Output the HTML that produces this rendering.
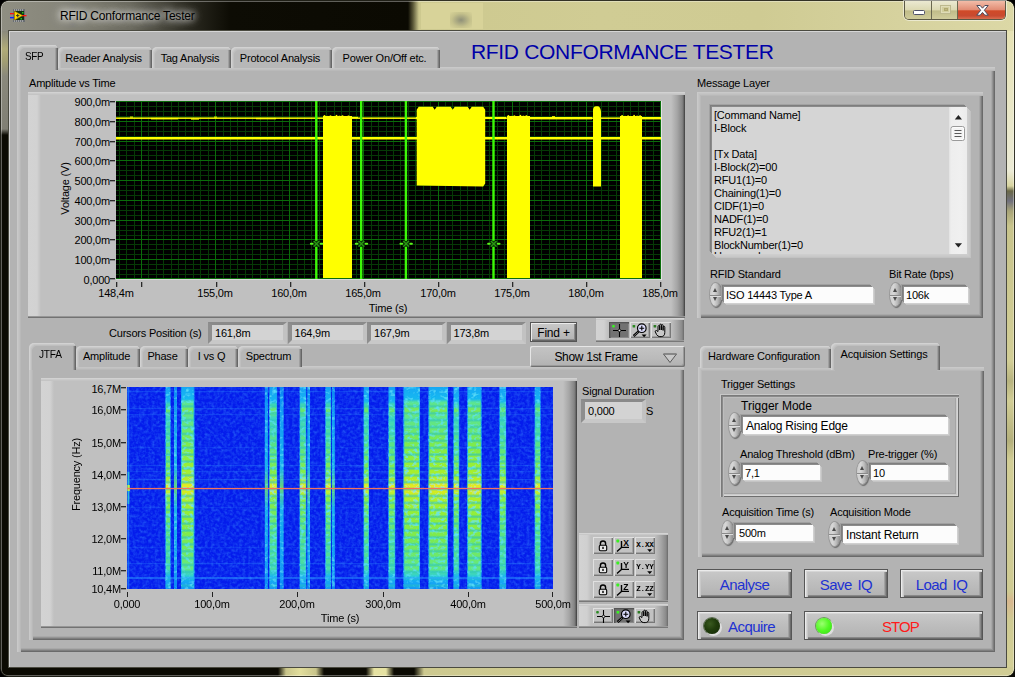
<!DOCTYPE html>
<html><head><meta charset="utf-8"><title>RFID Conformance Tester</title>
<style>
*{box-sizing:border-box;margin:0;padding:0}
html,body{width:1015px;height:677px;overflow:hidden;background:#0b0a02}
body{position:relative;font-family:"Liberation Sans",sans-serif;font-size:11px;color:#000;letter-spacing:-0.2px}
.a{position:absolute}
.t{position:absolute;white-space:nowrap;line-height:13px;height:13px}
.t12{font-size:12px;line-height:14px;height:14px}
.c{text-align:center}
.r{text-align:right}
/* generic raised page */
.page{position:absolute;background:#b3b3b3;box-shadow:inset 1px 1px 0 #c9c9c9,inset 2px 2px 0 #c4c4c4,inset 3px 3px 0 #c0c0c0,inset 4px 4px 0 #b9b9b9,inset -1px -1px 0 #6a6a6a,inset -2px -2px 0 #7e7e7e,inset -3px -3px 0 #949494,inset -4px -4px 0 #a8a8a8}
.gframe{position:absolute;background:linear-gradient(to right,#d3d3d3 0,#d2d2d2 9px,#c0c0c0 13px,#c0c0c0 calc(100% - 14px),#a6a6a6 calc(100% - 8px),#868686 calc(100% - 3px),#747474 calc(100% - 1.6px),#4c4c4c calc(100% - 1.2px),#4a4a4a 100%);box-shadow:inset 0 1px 0 #d2d2d2,inset 0 2px 0 #cacaca,inset 0 3px 0 #c4c4c4,inset 0 -1px 0 #727272,inset 0 -2px 0 #969696}
.tab{position:absolute;padding-right:3px;background:#b7b7b7;border-radius:5px 4px 0 0;box-shadow:inset 1px 1px 0 #d2d2d2,inset 2px 2px 0 #c8c8c8,inset 3px 3px 0 #bfbfbf,inset -1px 0 0 #666,inset -2px 0 0 #808080,inset -3px 0 0 #a0a0a0;text-align:center}
.tab.sel{background:#b3b3b3}
.field{position:absolute;background:#d3d3d3;border-style:solid;border-width:3px 4px 4px 4px;border-color:#8a8a8a #c2c2c2 #c8c8c8 #8e8e8e;padding-left:3px}
.input{position:absolute;background:#fcfcfc;box-shadow:-1px -1px 0 #8c8c8c,-2px -2px 0 #7e7e7e,-3px -3px 0 #a0a0a0,1px 1px 0 #d0d0d0,2px 2px 0 #c4c4c4;padding-left:2px}
.btn{position:absolute;border:1px solid #565656;background:linear-gradient(to bottom,#c9c9c9 0,#bebebe 45%,#b2b2b2 100%);box-shadow:inset 1px 1px 0 #ebebeb,inset 2px 2px 0 #d6d6d6,inset 3px 2px 0 #c8c8c8,inset -1px -1px 0 #6c6c6c,inset -2px -2px 0 #888,inset -3px -2px 0 #a2a2a2;text-align:center;color:#1e32d2;font-size:15px;letter-spacing:-0.55px;word-spacing:2px}
.spin{position:absolute;width:11px;border-radius:50%;background:linear-gradient(to right,#cfcfcf 0,#d6d6d6 35%,#bcbcbc 65%,#8e8e8e 100%);box-shadow:0 0 0 1px #9a9a9a,1px 1px 1px 1px #6e6e6e}
.spin:before,.spin:after{content:"";position:absolute;left:3px;width:0;height:0;border-left:2.5px solid transparent;border-right:2.5px solid transparent}
.spin:before{top:5px;border-bottom:4px solid #4a4a4a}
.spin:after{bottom:5px;border-top:4px solid #4a4a4a}
.spin i{position:absolute;left:0;right:0;top:50%;height:1px;background:#8a8a8a;box-shadow:0 1px 0 #dcdcdc}
</style></head>
<body>
<!-- window frame -->
<div class="a" style="left:0;top:0;width:1015px;height:677px;background:#0b0a02"></div>
<div class="a" style="left:0;top:0;width:1015px;height:31px;background:linear-gradient(to right,#8f8e82 0,#87867a 60px,#6a695e 130px,#2a2920 190px,#0d0c04 230px,#0b0a02 408px,#5a5838 413px,#cdc98f 419px,#d0cc94 600px,#cfcb93 760px,#d6d29e 900px,#dcd8a6 1015px)"></div>
<div class="a" style="left:421px;top:3px;width:62px;height:26px;background:#d9d49a;opacity:.9"></div>
<div class="a" style="left:450px;top:12px;width:22px;height:16px;background:radial-gradient(ellipse at center,#8f9078 0,rgba(170,168,120,.4) 60%,rgba(200,196,140,0) 100%)"></div>
<div class="a" style="left:0;top:31px;width:9px;height:646px;background:linear-gradient(to bottom,#8a897c 0,#b0ab78 18px,#a29e72 30px,#8a897c 45px,#807f74 98px,#0b0a02 104px,#0b0a02 100%)"></div>
<div class="a" style="left:1006px;top:31px;width:9px;height:646px;background:linear-gradient(to bottom,#e6e2b4 0,#ecebd6 140px,#d8d4a0 155px,#6a6848 160px,#70707c 170px,#a8a478 180px,#c8c48c 195px,#d2ce96 330px,#b8b480 350px,#d2ce96 370px,#b4b07c 410px,#d2ce96 430px,#cfcb93 560px,#d8b890 570px,#cfcb93 590px,#d4d098 100%)"></div>
<div class="a" style="left:0;top:667px;width:1015px;height:10px;background:linear-gradient(to right,#0b0a02 0,#0b0a02 278px,#c8c48a 286px,#e2de9c 300px,#c8c48a 316px,#0b0a02 324px,#0b0a02 366px,#e6e2a2 374px,#e6e2a2 386px,#0b0a02 394px,#0b0a02 414px,#cdc98f 424px,#d0cc94 100%)"></div>
<div class="a" style="left:0;top:0;width:1015px;height:677px;border-radius:7px;box-shadow:inset 0 0 0 1px rgba(20,20,10,.85),inset 0 0 0 2px rgba(255,255,255,.35)"></div>
<div class="a" style="left:0;top:0;width:8px;height:8px;background:radial-gradient(circle at 8px 8px,rgba(0,0,0,0) 6.6px,rgba(30,30,20,.9) 7.2px,#000 8px)"></div><div class="a" style="left:1007px;top:0;width:8px;height:8px;background:radial-gradient(circle at 0 8px,rgba(0,0,0,0) 6.6px,rgba(30,30,20,.9) 7.2px,#000 8px)"></div><div class="a" style="left:1007px;top:669px;width:8px;height:8px;background:radial-gradient(circle at 0 0,rgba(0,0,0,0) 6.6px,rgba(30,30,20,.9) 7.2px,#0a0a05 8px)"></div><div class="a" style="left:0;top:669px;width:8px;height:8px;background:radial-gradient(circle at 8px 0,rgba(0,0,0,0) 6.6px,rgba(30,30,20,.9) 7.2px,#000 8px)"></div>
<div class="a" style="left:8px;top:30px;width:999px;height:638px;background:#b3b3b3;border:1px solid #4a4a40;box-shadow:inset 1px 1px 0 #d6d6d6"></div>
<div class="t t12" style="left:60px;top:9px;color:#000;text-shadow:0 0 6px rgba(255,255,255,.9),0 0 10px rgba(255,255,255,.8),0 0 14px rgba(255,255,255,.6)">RFID Conformance Tester</div>
<svg class="a" style="left:10px;top:7.5px" width="18" height="15" viewBox="0 0 18 15">
<rect x="3" y="1" width="12" height="13" fill="#6a6e72"/>
<rect x="4" y="3" width="10" height="9" fill="#103010"/>
<g fill="#d0d0d0"><rect x="4" y="1.5" width="1" height="1"/><rect x="6" y="1.5" width="1" height="1"/><rect x="8" y="1.5" width="1" height="1"/><rect x="10" y="1.5" width="1" height="1"/><rect x="12" y="1.5" width="1" height="1"/><rect x="4" y="12.5" width="1" height="1"/><rect x="6" y="12.5" width="1" height="1"/><rect x="8" y="12.5" width="1" height="1"/><rect x="10" y="12.5" width="1" height="1"/><rect x="12" y="12.5" width="1" height="1"/></g>
<rect x="0" y="5" width="4" height="1.3" fill="#ff1010"/><rect x="0" y="9" width="4" height="1.3" fill="#1020ff"/><rect x="12" y="7" width="4.5" height="1.3" fill="#ff1010"/>
<path d="M4.5 3.2 L12.5 7.6 L4.5 12 Z" fill="#ffd800" stroke="#c89000" stroke-width=".5"/>
<rect x="12" y="4" width="1.5" height="1.5" fill="#20c020"/><rect x="10.5" y="10" width="1.5" height="1.5" fill="#20c020"/>
<path d="M6 7.6h3.4M7.7 5.9v3.4" stroke="#303030" stroke-width="1"/>
</svg>
<div class="a" style="left:904px;top:1px;width:102px;height:19px;border-radius:0 0 5px 5px;border:1px solid #5a5844;border-top:none;box-shadow:0 0 0 1px rgba(255,255,255,.5);overflow:hidden">
<div class="a" style="left:0;top:0;width:27px;height:19px;background:linear-gradient(to bottom,#ebe9d2 0,#dcd9b2 47%,#c0bc88 52%,#d0cc9c 100%);border-right:1px solid #6a6850"></div>
<div class="a" style="left:27px;top:0;width:26px;height:19px;background:linear-gradient(to bottom,#ebe9d2 0,#dcd9b2 47%,#c0bc88 52%,#d3cfa0 100%);border-right:1px solid #6a6850"></div>
<div class="a" style="left:53px;top:0;width:49px;height:19px;background:linear-gradient(to bottom,#f2bca8 0,#e28e76 45%,#d04a28 52%,#c84a30 78%,#de7a5a 100%)"></div>
<div class="a" style="left:8px;top:9px;width:12px;height:5px;border-radius:1.5px;background:#fff;border:1px solid #4e5068"></div>
<div class="a" style="left:35px;top:4px;width:11px;height:9px;border:1px solid #bdb98e;box-shadow:inset 0 0 0 1px #e0dcb8;background:#d2ce9e"></div>
<div class="a" style="left:39px;top:7px;width:4px;height:3px;background:#c0b880;border:1px solid #b0a870"></div>
<svg class="a" style="left:70px;top:3px" width="15" height="13" viewBox="0 0 15 13"><path d="M1.8 1.5h3.4l2.3 2.7 2.3-2.7h3.4L9.3 6.3l4 4.9H9.8L7.5 8.4 5.2 11.2H1.7l4-4.9Z" fill="#fff" stroke="#4a4a5c" stroke-width="1"/></svg>
</div>
<!-- main tab control -->
<div class="page" style="left:17px;top:67px;width:978px;height:585px"></div>
<div class="tab" style="left:58px;top:47px;width:94px;height:21px;line-height:23px">Reader Analysis</div>
<div class="tab" style="left:152px;top:47px;width:79px;height:21px;line-height:23px">Tag Analysis</div>
<div class="tab" style="left:231px;top:47px;width:101px;height:21px;line-height:23px">Protocol Analysis</div>
<div class="tab" style="left:332px;top:47px;width:108px;height:21px;line-height:23px">Power On/Off etc.</div>
<div class="tab sel" style="left:17px;top:45px;width:41px;height:25px;line-height:22px;letter-spacing:-0.4px;padding-right:6px"><span style="display:inline-block;transform:scaleX(.9);transform-origin:50% 50%">SFP</span></div>
<div class="a" style="left:21px;top:67px;width:34px;height:4px;background:#b3b3b3"></div>
<div class="t " style="left:471px;top:40px;font-size:21px;line-height:24px;height:24px;color:#0000a8;letter-spacing:-0.32px">RFID CONFORMANCE TESTER</div>
<!-- top graph -->
<div class="t " style="left:29px;top:77px;">Amplitude vs Time</div>
<div class="gframe" style="left:28px;top:92px;width:657px;height:226px"></div>
<svg class="a" style="left:116px;top:101px" width="545" height="178" viewBox="0 0 545 178" shape-rendering="crispEdges"><rect width="545" height="178" fill="#000"/><path d="M3.5 0V178M10.5 0V178M18.5 0V178M32.5 0V178M40.5 0V178M47.5 0V178M55.5 0V178M62.5 0V178M69.5 0V178M77.5 0V178M84.5 0V178M92.5 0V178M107.5 0V178M114.5 0V178M121.5 0V178M129.5 0V178M136.5 0V178M144.5 0V178M151.5 0V178M158.5 0V178M166.5 0V178M181.5 0V178M188.5 0V178M195.5 0V178M203.5 0V178M210.5 0V178M218.5 0V178M225.5 0V178M233.5 0V178M240.5 0V178M255.5 0V178M262.5 0V178M270.5 0V178M277.5 0V178M284.5 0V178M292.5 0V178M299.5 0V178M307.5 0V178M314.5 0V178M329.5 0V178M336.5 0V178M344.5 0V178M351.5 0V178M359.5 0V178M366.5 0V178M373.5 0V178M381.5 0V178M388.5 0V178M403.5 0V178M411.5 0V178M418.5 0V178M425.5 0V178M433.5 0V178M440.5 0V178M448.5 0V178M455.5 0V178M462.5 0V178M477.5 0V178M485.5 0V178M492.5 0V178M500.5 0V178M507.5 0V178M514.5 0V178M522.5 0V178M529.5 0V178M537.5 0V178M0 173.5H545M0 168.5H545M0 163.5H545M0 153.5H545M0 148.5H545M0 143.5H545M0 134.5H545M0 129.5H545M0 124.5H545M0 114.5H545M0 109.5H545M0 104.5H545M0 94.5H545M0 89.5H545M0 84.5H545M0 74.5H545M0 69.5H545M0 64.5H545M0 54.5H545M0 49.5H545M0 44.5H545M0 35.5H545M0 30.5H545M0 25.5H545M0 15.5H545M0 10.5H545M0 5.5H545" stroke="#063a06" stroke-width="1" fill="none"/><path d="M25.5 0V178M99.5 0V178M173.5 0V178M247.5 0V178M322.5 0V178M396.5 0V178M470.5 0V178M544.5 0V178M0 177.5H545M0 158.5H545M0 138.5H545M0 119.5H545M0 99.5H545M0 79.5H545M0 59.5H545M0 40.5H545M0 20.5H545M0 0.5H545" stroke="#0a6c0a" stroke-width="1" fill="none"/><rect shape-rendering="auto" x="0" y="16.4" width="545" height="1.5" fill="#ffff00"/><rect shape-rendering="auto" x="0" y="36" width="545" height="2.5" fill="#ffff00"/><rect shape-rendering="auto" x="35" y="16.9" width="27" height="1.5" fill="#ffff00"/><rect shape-rendering="auto" x="14" y="15.6" width="3" height="1" fill="#ffff00"/><rect shape-rendering="auto" x="98" y="15.6" width="3" height="1" fill="#ffff00"/><rect shape-rendering="auto" x="75" y="17.4" width="8" height="1.2" fill="#ffff00"/><rect shape-rendering="auto" x="140" y="16.9" width="20" height="1.4" fill="#ffff00"/><rect shape-rendering="auto" x="236" y="15.8" width="6" height="1.4" fill="#ffff00"/><rect shape-rendering="auto" x="300" y="16" width="5" height="2.2" fill="#ffff00"/><rect shape-rendering="auto" x="369" y="15.9" width="21" height="2.2" fill="#ffff00"/><rect shape-rendering="auto" x="414" y="16.0" width="62" height="2.4" fill="#ffff00"/><rect shape-rendering="auto" x="436" y="15.2" width="3" height="1" fill="#ffff00"/><rect shape-rendering="auto" x="391" y="17.4" width="4" height="1.3" fill="#ffff00"/><rect shape-rendering="auto" x="526" y="16.0" width="19" height="2.4" fill="#ffff00"/><rect shape-rendering="auto" x="234" y="17.6" width="2" height="1.2" fill="#ffff00"/><rect shape-rendering="auto" x="207.7" y="14.1" width="1.6" height="1.7" fill="#ffff00"/><rect shape-rendering="auto" x="210.7" y="14.9" width="1.6" height="0.9" fill="#ffff00"/><rect shape-rendering="auto" x="213.7" y="14.4" width="1.6" height="1.4" fill="#ffff00"/><rect shape-rendering="auto" x="216.7" y="15.1" width="1.6" height="0.7" fill="#ffff00"/><rect shape-rendering="auto" x="219.7" y="13.9" width="1.6" height="1.9" fill="#ffff00"/><rect shape-rendering="auto" x="222.7" y="14.7" width="1.6" height="1.1" fill="#ffff00"/><rect shape-rendering="auto" x="225.7" y="14.3" width="1.6" height="1.5" fill="#ffff00"/><rect shape-rendering="auto" x="228.7" y="15.0" width="1.6" height="0.8" fill="#ffff00"/><rect shape-rendering="auto" x="231.7" y="14.5" width="1.6" height="1.3" fill="#ffff00"/><rect shape-rendering="auto" x="391.6" y="14.1" width="1.6" height="1.7" fill="#ffff00"/><rect shape-rendering="auto" x="394.6" y="14.9" width="1.6" height="0.9" fill="#ffff00"/><rect shape-rendering="auto" x="397.6" y="14.4" width="1.6" height="1.4" fill="#ffff00"/><rect shape-rendering="auto" x="400.6" y="15.1" width="1.6" height="0.7" fill="#ffff00"/><rect shape-rendering="auto" x="403.6" y="13.9" width="1.6" height="1.9" fill="#ffff00"/><rect shape-rendering="auto" x="406.6" y="14.7" width="1.6" height="1.1" fill="#ffff00"/><rect shape-rendering="auto" x="409.6" y="14.3" width="1.6" height="1.5" fill="#ffff00"/><rect shape-rendering="auto" x="505.3" y="14.1" width="1.6" height="1.7" fill="#ffff00"/><rect shape-rendering="auto" x="508.3" y="14.9" width="1.6" height="0.9" fill="#ffff00"/><rect shape-rendering="auto" x="511.3" y="14.4" width="1.6" height="1.4" fill="#ffff00"/><rect shape-rendering="auto" x="514.3" y="15.1" width="1.6" height="0.7" fill="#ffff00"/><rect shape-rendering="auto" x="517.3" y="13.9" width="1.6" height="1.9" fill="#ffff00"/><rect shape-rendering="auto" x="520.3" y="14.7" width="1.6" height="1.1" fill="#ffff00"/><rect shape-rendering="auto" x="523.3" y="14.3" width="1.6" height="1.5" fill="#ffff00"/><rect x="206.7" y="15.3" width="29.6" height="161.9" fill="#ffff00"/><rect x="390.6" y="15.3" width="23.6" height="161.9" fill="#ffff00"/><rect x="504.3" y="15.3" width="21.6" height="161.9" fill="#ffff00"/><path shape-rendering="auto" d="M300.7 84.6 V8.799999999999997 L302.7 5.799999999999997 H316.7 l2 3 l2 -3 h14 l2 3 l2 -3 h13 l2 3 l2 -3 H367.2 L369.2 8.799999999999997 V82.6 l-2 3 Z" fill="#ffff00"/><path shape-rendering="auto" d="M477.0 85.4V8.5q0.6 -3.2 3 -3.2h1.6q2.6 0 3.4 5V85.4Z" fill="#ffff00"/><rect shape-rendering="auto" x="199.1" y="0" width="2.4" height="178" fill="#3cf808"/><g shape-rendering="auto"><rect x="197.1" y="139.8" width="6.8" height="6" fill="#0a3a06"/><path d="M197.70000000000002 140L203.3 145.6M203.3 140L197.70000000000002 145.6" stroke="#2c9a14" stroke-width="1.3" fill="none"/><rect x="193.9" y="141.8" width="3.6" height="2" rx="1" fill="#5cf21c"/><rect x="203.7" y="141.8" width="3.6" height="2" rx="1" fill="#5cf21c"/></g><rect shape-rendering="auto" x="244.0" y="0" width="2.4" height="178" fill="#3cf808"/><g shape-rendering="auto"><rect x="242.0" y="139.8" width="6.8" height="6" fill="#0a3a06"/><path d="M242.6 140L248.2 145.6M248.2 140L242.6 145.6" stroke="#2c9a14" stroke-width="1.3" fill="none"/><rect x="238.8" y="141.8" width="3.6" height="2" rx="1" fill="#5cf21c"/><rect x="248.6" y="141.8" width="3.6" height="2" rx="1" fill="#5cf21c"/></g><rect shape-rendering="auto" x="288.7" y="0" width="2.4" height="178" fill="#3cf808"/><g shape-rendering="auto"><rect x="286.7" y="139.8" width="6.8" height="6" fill="#0a3a06"/><path d="M287.29999999999995 140L292.9 145.6M292.9 140L287.29999999999995 145.6" stroke="#2c9a14" stroke-width="1.3" fill="none"/><rect x="283.5" y="141.8" width="3.6" height="2" rx="1" fill="#5cf21c"/><rect x="293.3" y="141.8" width="3.6" height="2" rx="1" fill="#5cf21c"/></g><rect shape-rendering="auto" x="376.3" y="0" width="2.4" height="178" fill="#3cf808"/><g shape-rendering="auto"><rect x="374.3" y="139.8" width="6.8" height="6" fill="#0a3a06"/><path d="M374.9 140L380.5 145.6M380.5 140L374.9 145.6" stroke="#2c9a14" stroke-width="1.3" fill="none"/><rect x="371.1" y="141.8" width="3.6" height="2" rx="1" fill="#5cf21c"/><rect x="380.9" y="141.8" width="3.6" height="2" rx="1" fill="#5cf21c"/></g></svg>
<div class="a" style="left:661px;top:101px;width:1px;height:179px;background:#e2e2e2"></div><div class="a" style="left:116px;top:279px;width:545px;height:1px;background:#dadada"></div>
<div class="t r" style="left:60px;top:96px;width:50px;">900,0m</div>
<div class="a" style="left:110px;top:101px;width:5px;height:1px;background:#2a2a2a;box-shadow:0 1px 0 rgba(40,40,40,.35)"></div>
<div class="t r" style="left:60px;top:116px;width:50px;">800,0m</div>
<div class="a" style="left:110px;top:121px;width:5px;height:1px;background:#2a2a2a;box-shadow:0 1px 0 rgba(40,40,40,.35)"></div>
<div class="t r" style="left:60px;top:136px;width:50px;">700,0m</div>
<div class="a" style="left:110px;top:141px;width:5px;height:1px;background:#2a2a2a;box-shadow:0 1px 0 rgba(40,40,40,.35)"></div>
<div class="t r" style="left:60px;top:155px;width:50px;">600,0m</div>
<div class="a" style="left:110px;top:160px;width:5px;height:1px;background:#2a2a2a;box-shadow:0 1px 0 rgba(40,40,40,.35)"></div>
<div class="t r" style="left:60px;top:175px;width:50px;">500,0m</div>
<div class="a" style="left:110px;top:180px;width:5px;height:1px;background:#2a2a2a;box-shadow:0 1px 0 rgba(40,40,40,.35)"></div>
<div class="t r" style="left:60px;top:195px;width:50px;">400,0m</div>
<div class="a" style="left:110px;top:200px;width:5px;height:1px;background:#2a2a2a;box-shadow:0 1px 0 rgba(40,40,40,.35)"></div>
<div class="t r" style="left:60px;top:215px;width:50px;">300,0m</div>
<div class="a" style="left:110px;top:220px;width:5px;height:1px;background:#2a2a2a;box-shadow:0 1px 0 rgba(40,40,40,.35)"></div>
<div class="t r" style="left:60px;top:234px;width:50px;">200,0m</div>
<div class="a" style="left:110px;top:239px;width:5px;height:1px;background:#2a2a2a;box-shadow:0 1px 0 rgba(40,40,40,.35)"></div>
<div class="t r" style="left:60px;top:254px;width:50px;">100,0m</div>
<div class="a" style="left:110px;top:259px;width:5px;height:1px;background:#2a2a2a;box-shadow:0 1px 0 rgba(40,40,40,.35)"></div>
<div class="t r" style="left:60px;top:274px;width:50px;">0,000</div>
<div class="a" style="left:110px;top:278px;width:5px;height:1px;background:#2a2a2a;box-shadow:0 1px 0 rgba(40,40,40,.35)"></div>
<div class="t" style="left:15px;top:182px;width:100px;text-align:center;transform:rotate(-90deg)">Voltage (V)</div>
<div class="t c" style="left:91px;top:287px;width:50px;">148,4m</div>
<div class="t c" style="left:190px;top:287px;width:50px;">155,0m</div>
<div class="t c" style="left:264px;top:287px;width:50px;">160,0m</div>
<div class="t c" style="left:338px;top:287px;width:50px;">165,0m</div>
<div class="t c" style="left:413px;top:287px;width:50px;">170,0m</div>
<div class="t c" style="left:487px;top:287px;width:50px;">175,0m</div>
<div class="t c" style="left:561px;top:287px;width:50px;">180,0m</div>
<div class="t c" style="left:635px;top:287px;width:50px;">185,0m</div>
<div class="a" style="left:116px;top:282px;width:1px;height:5px;background:#2a2a2a;box-shadow:1px 0 0 rgba(40,40,40,.3)"></div>
<div class="a" style="left:141px;top:282px;width:1px;height:5px;background:#2a2a2a;box-shadow:1px 0 0 rgba(40,40,40,.3)"></div>
<div class="a" style="left:216px;top:282px;width:1px;height:5px;background:#2a2a2a;box-shadow:1px 0 0 rgba(40,40,40,.3)"></div>
<div class="a" style="left:290px;top:282px;width:1px;height:5px;background:#2a2a2a;box-shadow:1px 0 0 rgba(40,40,40,.3)"></div>
<div class="a" style="left:364px;top:282px;width:1px;height:5px;background:#2a2a2a;box-shadow:1px 0 0 rgba(40,40,40,.3)"></div>
<div class="a" style="left:438px;top:282px;width:1px;height:5px;background:#2a2a2a;box-shadow:1px 0 0 rgba(40,40,40,.3)"></div>
<div class="a" style="left:512px;top:282px;width:1px;height:5px;background:#2a2a2a;box-shadow:1px 0 0 rgba(40,40,40,.3)"></div>
<div class="a" style="left:586px;top:282px;width:1px;height:5px;background:#2a2a2a;box-shadow:1px 0 0 rgba(40,40,40,.3)"></div>
<div class="a" style="left:660px;top:282px;width:1px;height:5px;background:#2a2a2a;box-shadow:1px 0 0 rgba(40,40,40,.3)"></div>
<div class="t c" style="left:363px;top:302px;width:50px;">Time (s)</div>
<div class="t " style="left:109px;top:327px;">Cursors Position (s)</div>
<div class="field" style="left:208.0px;top:322px;width:79px;height:22px;line-height:16px">161,8m</div>
<div class="field" style="left:287.5px;top:322px;width:79px;height:22px;line-height:16px">164,9m</div>
<div class="field" style="left:367.0px;top:322px;width:79px;height:22px;line-height:16px">167,9m</div>
<div class="field" style="left:446.5px;top:322px;width:79px;height:22px;line-height:16px">173,8m</div>
<!-- find + palette -->
<div class="btn" style="left:530px;top:322px;width:47px;height:20px;font-size:12px;color:#000;line-height:21px;letter-spacing:-0.2px;word-spacing:0;box-shadow:inset 1px 1px 0 #ececec,inset -1px -1px 0 #666,inset -2px -2px 0 #8a8a8a">Find +</div>
<div class="a" style="left:596px;top:318px;width:88px;height:24px;background:linear-gradient(to right,#d3d3d3 0,#d0d0d0 8px,#c0c0c0 12px,#c0c0c0 calc(100% - 13px),#a6a6a6 calc(100% - 7px),#8a8a8a calc(100% - 2px),#6a6a6a 100%);box-shadow:inset 0 1px 0 #d4d4d4,inset 0 2px 0 #c8c8c8,inset 0 -1px 0 #787878,inset 0 -2px 0 #9a9a9a"></div>
<div class="a" style="left:609px;top:322px;width:20px;height:16px;background:#727272;box-shadow:inset 1px 1px 0 #555,inset 2px 2px 0 #686868,inset -1px -1px 0 #8a8a8a"></div>
<svg class="a" style="left:609px;top:322px" width="20" height="16" viewBox="0 0 20 16"><path d="M4 8.5H17M10.5 2V15" stroke="#000" stroke-width="1.1"/><circle cx="10.5" cy="8.5" r="1.3" fill="#e8e8e8" stroke="#000" stroke-width=".8"/><rect x="3.2" y="3" width="2.6" height="2.6" rx=".8" fill="#38f820"/></svg>
<div class="a" style="left:630px;top:322px;width:20px;height:16px;background:#c2c2c2;box-shadow:inset 1px 1px 0 #e0e0e0,inset -1px -1px 0 #787878,inset -2px -2px 0 #a2a2a2"></div>
<svg class="a" style="left:630px;top:322px" width="20" height="16" viewBox="0 0 20 16"><circle cx="11.8" cy="6.2" r="4.3" fill="#dcdcfc" stroke="#000" stroke-width="1.2"/><path d="M9.4 6.2h4.8M11.8 3.8v4.8" stroke="#000" stroke-width="1.1"/><path d="M8.4 9.6L3.6 14" stroke="#000" stroke-width="2.4"/><path d="M8 10.2L4.2 13.6" stroke="#8a8a8a" stroke-width=".8"/><path d="M11.6 12.4h5l-2.5 2.8z" fill="#000"/><rect x="2.6" y="3" width="2.6" height="2.6" rx=".6" fill="#2a8a22"/></svg>
<div class="a" style="left:651px;top:322px;width:20px;height:16px;background:#c2c2c2;box-shadow:inset 1px 1px 0 #e0e0e0,inset -1px -1px 0 #787878,inset -2px -2px 0 #a2a2a2"></div>
<svg class="a" style="left:651px;top:322px" width="20" height="16" viewBox="0 0 20 16"><path d="M7 9.5V4.6q0-1 .85-1t.85 1V8V3.2q0-1 .85-1t.85 1V8V3.6q0-1 .85-1t.85 1V8.4V5.2q0-1 .85-1t.85 1V10.4q0 4.2-3.6 4.2h-1.4q-2 0-3.2-2L4.4 10q-.5-1 .3-1.4t1.4.5z" fill="#c8c8c8" stroke="#000" stroke-width="1"/><rect x="2.6" y="3" width="2.6" height="2.6" rx=".6" fill="#2a7a22"/></svg>
<!-- lower-left tab control -->
<div class="page" style="left:29px;top:366px;width:655px;height:274px"></div>
<div class="tab" style="left:76px;top:346px;width:64px;height:21px;line-height:21px">Amplitude</div>
<div class="tab" style="left:140px;top:346px;width:48px;height:21px;line-height:21px">Phase</div>
<div class="tab" style="left:188px;top:346px;width:50px;height:21px;line-height:21px">I vs Q</div>
<div class="tab" style="left:238px;top:346px;width:64px;height:21px;line-height:21px">Spectrum</div>
<div class="tab sel" style="left:29px;top:343px;width:47px;height:27px;line-height:22px;padding-right:5px"><span style="display:inline-block;transform:scaleX(.92)">JTFA</span></div>
<div class="a" style="left:33px;top:366px;width:40px;height:4px;background:#b3b3b3"></div>
<div class="a" style="left:530px;top:346px;width:155px;height:21px;background:linear-gradient(to bottom,#c4c4c4,#bababa 60%,#b0b0b0);box-shadow:inset 1px 1px 0 #e6e6e6,inset -1px -1px 0 #707070,inset -2px -2px 0 #9a9a9a;border-radius:2px"></div>
<div class="t t12 c" style="left:530px;top:350px;width:132px;letter-spacing:-0.3px">Show 1st Frame</div>
<svg class="a" style="left:662px;top:352px" width="16" height="12" viewBox="0 0 16 12"><path d="M1.5 2H14.5L8 10.5Z" fill="#c8c8c8" stroke="#5a5a5a" stroke-width="1"/><path d="M1.5 2H14.5" stroke="#808080" stroke-width="1"/></svg>
<div class="gframe" style="left:41px;top:378px;width:536px;height:250px"></div>
<svg class="a" style="left:127px;top:387px" width="426" height="202" viewBox="0 0 426 202"><defs><linearGradient id="gs" x1="0" y1="0" x2="0" y2="1"><stop offset="0" stop-color="#14a8f4"/><stop offset="0.06" stop-color="#18b8f0"/><stop offset="0.075" stop-color="#58e498"/><stop offset="0.12" stop-color="#7cea50"/><stop offset="0.15" stop-color="#5ce490"/><stop offset="0.26" stop-color="#78ea54"/><stop offset="0.37" stop-color="#92ee38"/><stop offset="0.45" stop-color="#b2f028"/><stop offset="0.497" stop-color="#ece820"/><stop offset="0.55" stop-color="#b2f028"/><stop offset="0.63" stop-color="#92ee38"/><stop offset="0.75" stop-color="#7cea50"/><stop offset="0.90" stop-color="#62e880"/><stop offset="0.935" stop-color="#30d0d0"/><stop offset="0.95" stop-color="#16b0f4"/><stop offset="1" stop-color="#1498f4"/></linearGradient><linearGradient id="gt" x1="0" y1="0" x2="0" y2="1"><stop offset="0" stop-color="#14a0f4"/><stop offset="0.07" stop-color="#18b4f2"/><stop offset="0.09" stop-color="#48dca8"/><stop offset="0.12" stop-color="#70e860"/><stop offset="0.15" stop-color="#3cd4c0"/><stop offset="0.30" stop-color="#5ce480"/><stop offset="0.44" stop-color="#8cee40"/><stop offset="0.497" stop-color="#ecec24"/><stop offset="0.55" stop-color="#8cee40"/><stop offset="0.72" stop-color="#5ce480"/><stop offset="0.90" stop-color="#48dca8"/><stop offset="0.94" stop-color="#1ab4f2"/><stop offset="1" stop-color="#1498f4"/></linearGradient><linearGradient id="gc" x1="0" y1="0" x2="0" y2="1"><stop offset="0" stop-color="#1090f4"/><stop offset="0.1" stop-color="#14a8f6"/><stop offset="0.40" stop-color="#1cc0ee"/><stop offset="0.497" stop-color="#70e870"/><stop offset="0.6" stop-color="#1cc0ee"/><stop offset="0.93" stop-color="#14a8f6"/><stop offset="1" stop-color="#1090f4"/></linearGradient><pattern id="bands" width="8" height="6.9" patternUnits="userSpaceOnUse"><rect width="8" height="2.2" y="4.4" fill="#24c0c8" opacity=".6"/></pattern><filter id="nz" x="0" y="0" width="100%" height="100%"><feTurbulence type="fractalNoise" baseFrequency="0.32" numOctaves="2" seed="3"/><feColorMatrix values="0 0 0 0 0.05  0 0 0 0 0.30  0 0 0 0 1  1.7 0.7 0 0 -0.95"/></filter><filter id="bl" filterUnits="userSpaceOnUse" x="0" y="0" width="426" height="202"><feGaussianBlur in="SourceGraphic" stdDeviation="0.6 0" result="b"/><feTurbulence type="fractalNoise" baseFrequency="0.22 0.30" numOctaves="2" seed="8" result="t"/><feColorMatrix in="t" values="0 0 0 0 0.10  0 0 0 0 0.74  0 0 0 0 0.94  2.8 0 0 0 -1.42" result="c"/><feComposite in="c" in2="b" operator="in" result="ci"/><feMerge><feMergeNode in="b"/><feMergeNode in="ci"/></feMerge></filter></defs><rect width="426" height="202" fill="#041cec"/><rect width="426" height="202" filter="url(#nz)" opacity=".45"/><rect x="0" y="4" width="426" height="1.2" fill="#35a0ff" opacity="0.25"/><rect x="0" y="21" width="426" height="1.2" fill="#35a0ff" opacity="0.25"/><rect x="0" y="27" width="426" height="1.2" fill="#35a0ff" opacity="0.2"/><rect x="0" y="60" width="426" height="1.2" fill="#35a0ff" opacity="0.15"/><rect x="0" y="78" width="426" height="1.2" fill="#35a0ff" opacity="0.25"/><rect x="0" y="84" width="426" height="1.2" fill="#35a0ff" opacity="0.2"/><rect x="0" y="92" width="426" height="1.2" fill="#35a0ff" opacity="0.3"/><rect x="0" y="120" width="426" height="1.2" fill="#35a0ff" opacity="0.15"/><rect x="0" y="160" width="426" height="1.2" fill="#35a0ff" opacity="0.15"/><rect x="0" y="176" width="426" height="1.2" fill="#35a0ff" opacity="0.25"/><g filter="url(#bl)"><rect x="38.4" y="0" width="5.2" height="202" fill="url(#gc)"/><rect x="39.0" y="0" width="4.0" height="202" fill="url(#gt)"/><rect x="38.4" y="14" width="5.2" height="188" fill="url(#bands)"/><rect x="47.0" y="0" width="3.0" height="202" fill="url(#gc)" opacity=".9"/><rect x="54.0" y="0" width="13.4" height="202" fill="url(#gc)"/><rect x="54.9" y="0" width="11.6" height="202" fill="url(#gs)"/><rect x="54.0" y="14" width="13.4" height="188" fill="url(#bands)"/><rect x="137.8" y="0" width="3.1" height="202" fill="url(#gc)" opacity=".9"/><rect x="142.3" y="0" width="7.8" height="202" fill="url(#gc)"/><rect x="142.9" y="0" width="6.6" height="202" fill="url(#gt)"/><rect x="142.3" y="14" width="7.8" height="188" fill="url(#bands)"/><rect x="152.8" y="0" width="3.8" height="202" fill="url(#gc)" opacity=".9"/><rect x="172.6" y="0" width="6.6" height="202" fill="url(#gc)"/><rect x="173.2" y="0" width="5.4" height="202" fill="url(#gt)"/><rect x="172.6" y="14" width="6.6" height="188" fill="url(#bands)"/><rect x="180.3" y="0" width="2.7" height="202" fill="url(#gc)" opacity=".9"/><rect x="198.3" y="0" width="5.7" height="202" fill="url(#gc)"/><rect x="198.9" y="0" width="4.5" height="202" fill="url(#gt)"/><rect x="198.3" y="14" width="5.7" height="188" fill="url(#bands)"/><rect x="205.0" y="0" width="2.8" height="202" fill="url(#gc)" opacity=".9"/><rect x="236.6" y="0" width="5.4" height="202" fill="url(#gc)"/><rect x="237.2" y="0" width="4.2" height="202" fill="url(#gt)"/><rect x="236.6" y="14" width="5.4" height="188" fill="url(#bands)"/><rect x="261.4" y="0" width="6.8" height="202" fill="url(#gc)"/><rect x="262.0" y="0" width="5.6" height="202" fill="url(#gt)"/><rect x="261.4" y="14" width="6.8" height="188" fill="url(#bands)"/><rect x="276.4" y="0" width="16.6" height="202" fill="url(#gc)"/><rect x="277.3" y="0" width="14.8" height="202" fill="url(#gs)"/><rect x="276.4" y="14" width="16.6" height="188" fill="url(#bands)"/><rect x="301.4" y="0" width="19.6" height="202" fill="url(#gc)"/><rect x="302.3" y="0" width="17.8" height="202" fill="url(#gs)"/><rect x="301.4" y="14" width="19.6" height="188" fill="url(#bands)"/><rect x="326.4" y="0" width="5.8" height="202" fill="url(#gc)"/><rect x="327.0" y="0" width="4.6" height="202" fill="url(#gt)"/><rect x="326.4" y="14" width="5.8" height="188" fill="url(#bands)"/><rect x="340.2" y="0" width="14.4" height="202" fill="url(#gc)"/><rect x="341.1" y="0" width="12.6" height="202" fill="url(#gs)"/><rect x="340.2" y="14" width="14.4" height="188" fill="url(#bands)"/><rect x="372.4" y="0" width="6.7" height="202" fill="url(#gc)"/><rect x="373.0" y="0" width="5.5" height="202" fill="url(#gt)"/><rect x="372.4" y="14" width="6.7" height="188" fill="url(#bands)"/><rect x="407.7" y="0" width="5.9" height="202" fill="url(#gc)"/><rect x="408.3" y="0" width="4.7" height="202" fill="url(#gt)"/><rect x="407.7" y="14" width="5.9" height="188" fill="url(#bands)"/></g><rect x="0" y="190.2" width="426" height="1.6" fill="#2ea8ff" opacity=".55"/><rect x="0.6" y="0" width="1.6" height="202" fill="#1c84f4" opacity=".7"/><rect x="0.6" y="85" width="1.8" height="32" fill="#30d0d0" opacity=".8"/><rect x="0.4" y="98" width="2.4" height="6" fill="#c0f040"/><rect x="0" y="100.9" width="426" height="1.3" fill="#f4745c"/></svg>
<div class="t r" style="left:70px;top:383px;width:51px;">16,7M</div>
<div class="a" style="left:121px;top:387px;width:5px;height:1px;background:#2a2a2a;box-shadow:0 1px 0 rgba(40,40,40,.35)"></div>
<div class="t r" style="left:70px;top:404px;width:51px;">16,0M</div>
<div class="a" style="left:121px;top:409px;width:5px;height:1px;background:#2a2a2a;box-shadow:0 1px 0 rgba(40,40,40,.35)"></div>
<div class="t r" style="left:70px;top:437px;width:51px;">15,0M</div>
<div class="a" style="left:121px;top:442px;width:5px;height:1px;background:#2a2a2a;box-shadow:0 1px 0 rgba(40,40,40,.35)"></div>
<div class="t r" style="left:70px;top:469px;width:51px;">14,0M</div>
<div class="a" style="left:121px;top:474px;width:5px;height:1px;background:#2a2a2a;box-shadow:0 1px 0 rgba(40,40,40,.35)"></div>
<div class="t r" style="left:70px;top:501px;width:51px;">13,0M</div>
<div class="a" style="left:121px;top:506px;width:5px;height:1px;background:#2a2a2a;box-shadow:0 1px 0 rgba(40,40,40,.35)"></div>
<div class="t r" style="left:70px;top:533px;width:51px;">12,0M</div>
<div class="a" style="left:121px;top:538px;width:5px;height:1px;background:#2a2a2a;box-shadow:0 1px 0 rgba(40,40,40,.35)"></div>
<div class="t r" style="left:70px;top:565px;width:51px;">11,0M</div>
<div class="a" style="left:121px;top:570px;width:5px;height:1px;background:#2a2a2a;box-shadow:0 1px 0 rgba(40,40,40,.35)"></div>
<div class="t r" style="left:70px;top:583px;width:51px;">10,4M</div>
<div class="a" style="left:121px;top:588px;width:5px;height:1px;background:#2a2a2a;box-shadow:0 1px 0 rgba(40,40,40,.35)"></div>
<div class="t" style="left:26px;top:468px;width:100px;text-align:center;transform:rotate(-90deg)">Frequency (Hz)</div>
<div class="t c" style="left:102px;top:598px;width:50px;">0,000</div>
<div class="a" style="left:127px;top:592px;width:1px;height:5px;background:#222"></div>
<div class="t c" style="left:187px;top:598px;width:50px;">100,0m</div>
<div class="a" style="left:212px;top:592px;width:1px;height:5px;background:#222"></div>
<div class="t c" style="left:272px;top:598px;width:50px;">200,0m</div>
<div class="a" style="left:297px;top:592px;width:1px;height:5px;background:#222"></div>
<div class="t c" style="left:358px;top:598px;width:50px;">300,0m</div>
<div class="a" style="left:383px;top:592px;width:1px;height:5px;background:#222"></div>
<div class="t c" style="left:443px;top:598px;width:50px;">400,0m</div>
<div class="a" style="left:468px;top:592px;width:1px;height:5px;background:#222"></div>
<div class="t c" style="left:528px;top:598px;width:50px;">500,0m</div>
<div class="a" style="left:552px;top:592px;width:1px;height:5px;background:#222"></div>
<div class="t c" style="left:315px;top:612px;width:50px;">Time (s)</div>
<div class="t " style="left:582px;top:385px;">Signal Duration</div>
<div class="field" style="left:581px;top:399px;width:65px;height:24px;line-height:18px">0,000</div>
<div class="t " style="left:646px;top:405px;">S</div>
<div class="a" style="left:579px;top:533px;width:89px;height:69px;background:linear-gradient(to right,#d3d3d3 0,#d0d0d0 8px,#c0c0c0 12px,#c0c0c0 calc(100% - 13px),#a6a6a6 calc(100% - 7px),#8a8a8a calc(100% - 2px),#6a6a6a 100%);box-shadow:inset 0 1px 0 #d4d4d4,inset 0 2px 0 #c8c8c8,inset 0 -1px 0 #787878,inset 0 -2px 0 #9a9a9a"></div>
<div class="a" style="left:593px;top:537px;width:20px;height:17px;background:#c2c2c2;box-shadow:inset 1px 1px 0 #e0e0e0,inset -1px -1px 0 #787878,inset -2px -2px 0 #a2a2a2"></div>
<div class="a" style="left:614px;top:537px;width:20px;height:17px;background:#c2c2c2;box-shadow:inset 1px 1px 0 #e0e0e0,inset -1px -1px 0 #787878,inset -2px -2px 0 #a2a2a2"></div>
<div class="a" style="left:635px;top:537px;width:20px;height:17px;background:#c2c2c2;box-shadow:inset 1px 1px 0 #e0e0e0,inset -1px -1px 0 #787878,inset -2px -2px 0 #a2a2a2"></div>
<svg class="a" style="left:593px;top:537px" width="20" height="17" viewBox="0 0 20 17"><path d="M7.4 8.4V6.6q0-2.6 2.6-2.6T12.6 6.6V8.4" fill="none" stroke="#000" stroke-width="1.4"/><rect x="6.3" y="8.2" width="7.4" height="5.6" rx="1.2" fill="#e6e6e6" stroke="#000" stroke-width="1.1"/><rect x="9.3" y="9.8" width="1.4" height="2.2" fill="#000"/></svg>
<svg class="a" style="left:614px;top:537px" width="20" height="17" viewBox="0 0 20 17"><path d="M3 14.5L7.5 10.4V4M7.5 10.4H15" fill="none" stroke="#000" stroke-width="1.4"/><rect x="2.4" y="2.6" width="2.8" height="2.8" rx=".7" fill="#38f020"/><text x="9.2" y="9" font-family="Liberation Sans" font-size="8.5" font-weight="bold" fill="#000">X</text></svg>
<svg class="a" style="left:635px;top:537px" width="20" height="17" viewBox="0 0 20 17"><text x="1.2" y="9.5" font-family="Liberation Mono" font-size="8" font-weight="bold" fill="#000" textLength="17.4" lengthAdjust="spacingAndGlyphs">X.XX</text><path d="M12.2 12.2h5l-2.5 2.8z" fill="#000"/></svg>
<div class="a" style="left:593px;top:559px;width:20px;height:17px;background:#c2c2c2;box-shadow:inset 1px 1px 0 #e0e0e0,inset -1px -1px 0 #787878,inset -2px -2px 0 #a2a2a2"></div>
<div class="a" style="left:614px;top:559px;width:20px;height:17px;background:#c2c2c2;box-shadow:inset 1px 1px 0 #e0e0e0,inset -1px -1px 0 #787878,inset -2px -2px 0 #a2a2a2"></div>
<div class="a" style="left:635px;top:559px;width:20px;height:17px;background:#c2c2c2;box-shadow:inset 1px 1px 0 #e0e0e0,inset -1px -1px 0 #787878,inset -2px -2px 0 #a2a2a2"></div>
<svg class="a" style="left:593px;top:559px" width="20" height="17" viewBox="0 0 20 17"><path d="M7.4 8.4V6.6q0-2.6 2.6-2.6T12.6 6.6V8.4" fill="none" stroke="#000" stroke-width="1.4"/><rect x="6.3" y="8.2" width="7.4" height="5.6" rx="1.2" fill="#e6e6e6" stroke="#000" stroke-width="1.1"/><rect x="9.3" y="9.8" width="1.4" height="2.2" fill="#000"/></svg>
<svg class="a" style="left:614px;top:559px" width="20" height="17" viewBox="0 0 20 17"><path d="M3 14.5L7.5 10.4V4M7.5 10.4H15" fill="none" stroke="#000" stroke-width="1.4"/><rect x="2.4" y="2.6" width="2.8" height="2.8" rx=".7" fill="#38f020"/><text x="9.2" y="9" font-family="Liberation Sans" font-size="8.5" font-weight="bold" fill="#000">Y</text></svg>
<svg class="a" style="left:635px;top:559px" width="20" height="17" viewBox="0 0 20 17"><text x="1.2" y="9.5" font-family="Liberation Mono" font-size="8" font-weight="bold" fill="#000" textLength="17.4" lengthAdjust="spacingAndGlyphs">Y.YY</text><path d="M12.2 12.2h5l-2.5 2.8z" fill="#000"/></svg>
<div class="a" style="left:593px;top:581px;width:20px;height:17px;background:#c2c2c2;box-shadow:inset 1px 1px 0 #e0e0e0,inset -1px -1px 0 #787878,inset -2px -2px 0 #a2a2a2"></div>
<div class="a" style="left:614px;top:581px;width:20px;height:17px;background:#c2c2c2;box-shadow:inset 1px 1px 0 #e0e0e0,inset -1px -1px 0 #787878,inset -2px -2px 0 #a2a2a2"></div>
<div class="a" style="left:635px;top:581px;width:20px;height:17px;background:#c2c2c2;box-shadow:inset 1px 1px 0 #e0e0e0,inset -1px -1px 0 #787878,inset -2px -2px 0 #a2a2a2"></div>
<svg class="a" style="left:593px;top:581px" width="20" height="17" viewBox="0 0 20 17"><path d="M7.4 8.4V6.6q0-2.6 2.6-2.6T12.6 6.6V8.4" fill="none" stroke="#000" stroke-width="1.4"/><rect x="6.3" y="8.2" width="7.4" height="5.6" rx="1.2" fill="#e6e6e6" stroke="#000" stroke-width="1.1"/><rect x="9.3" y="9.8" width="1.4" height="2.2" fill="#000"/></svg>
<svg class="a" style="left:614px;top:581px" width="20" height="17" viewBox="0 0 20 17"><path d="M3 14.5L7.5 10.4V4M7.5 10.4H15" fill="none" stroke="#000" stroke-width="1.4"/><rect x="2.4" y="2.6" width="2.8" height="2.8" rx=".7" fill="#38f020"/><text x="9.2" y="9" font-family="Liberation Sans" font-size="8.5" font-weight="bold" fill="#000">Z</text></svg>
<svg class="a" style="left:635px;top:581px" width="20" height="17" viewBox="0 0 20 17"><text x="1.2" y="9.5" font-family="Liberation Mono" font-size="8" font-weight="bold" fill="#000" textLength="17.4" lengthAdjust="spacingAndGlyphs">Z.ZZ</text><path d="M12.2 12.2h5l-2.5 2.8z" fill="#000"/></svg>
<div class="a" style="left:579px;top:604px;width:89px;height:24px;background:linear-gradient(to right,#d3d3d3 0,#d0d0d0 8px,#c0c0c0 12px,#c0c0c0 calc(100% - 13px),#a6a6a6 calc(100% - 7px),#8a8a8a calc(100% - 2px),#6a6a6a 100%);box-shadow:inset 0 1px 0 #d4d4d4,inset 0 2px 0 #c8c8c8,inset 0 -1px 0 #787878,inset 0 -2px 0 #9a9a9a"></div>
<div class="a" style="left:593px;top:608px;width:20px;height:15px;background:#c2c2c2;box-shadow:inset 1px 1px 0 #e0e0e0,inset -1px -1px 0 #787878,inset -2px -2px 0 #a2a2a2"></div>
<svg class="a" style="left:593px;top:608px" width="20" height="16" viewBox="0 0 20 16"><path d="M4 8.5H17M10.5 2V15" stroke="#000" stroke-width="1.1"/><circle cx="10.5" cy="8.5" r="1.3" fill="#e8e8e8" stroke="#000" stroke-width=".8"/><rect x="3.2" y="3" width="2.6" height="2.6" rx=".8" fill="#2a8a22"/></svg>
<div class="a" style="left:614px;top:608px;width:20px;height:15px;background:#727272;box-shadow:inset 1px 1px 0 #555,inset 2px 2px 0 #686868,inset -1px -1px 0 #8a8a8a"></div>
<svg class="a" style="left:614px;top:608px" width="20" height="16" viewBox="0 0 20 16"><circle cx="11.8" cy="6.2" r="4.3" fill="#dcdcfc" stroke="#000" stroke-width="1.2"/><path d="M9.4 6.2h4.8M11.8 3.8v4.8" stroke="#000" stroke-width="1.1"/><path d="M8.4 9.6L3.6 14" stroke="#000" stroke-width="2.4"/><path d="M8 10.2L4.2 13.6" stroke="#8a8a8a" stroke-width=".8"/><path d="M11.6 12.4h5l-2.5 2.8z" fill="#000"/><rect x="2.6" y="3" width="2.6" height="2.6" rx=".6" fill="#38f820"/></svg>
<div class="a" style="left:635px;top:608px;width:20px;height:15px;background:#c2c2c2;box-shadow:inset 1px 1px 0 #e0e0e0,inset -1px -1px 0 #787878,inset -2px -2px 0 #a2a2a2"></div>
<svg class="a" style="left:635px;top:608px" width="20" height="16" viewBox="0 0 20 16"><path d="M7 9.5V4.6q0-1 .85-1t.85 1V8V3.2q0-1 .85-1t.85 1V8V3.6q0-1 .85-1t.85 1V8.4V5.2q0-1 .85-1t.85 1V10.4q0 4.2-3.6 4.2h-1.4q-2 0-3.2-2L4.4 10q-.5-1 .3-1.4t1.4.5z" fill="#c8c8c8" stroke="#000" stroke-width="1"/><rect x="2.6" y="3" width="2.6" height="2.6" rx=".6" fill="#2a7a22"/></svg>
<!-- message layer -->
<div class="t " style="left:697px;top:77px;">Message Layer</div>
<div class="page" style="left:697px;top:92px;width:286px;height:226px"></div>
<div class="a" style="left:712px;top:107px;width:255px;height:147px;background:#d5d5d5;box-shadow:-1px -1px 0 #8a8a8a,-2px -2px 0 #7e7e7e,-3px -3px 0 #a2a2a2,1px 1px 0 #cecece,2px 2px 0 #cbcbcb,3px 3px 0 #c8c8c8,4px 4px 0 #c2c2c2;overflow:hidden">
<div class="t" style="left:2px;top:2px">[Command Name]</div><div class="t" style="left:2px;top:15px">I-Block</div><div class="t" style="left:2px;top:28px"></div><div class="t" style="left:2px;top:41px">[Tx Data]</div><div class="t" style="left:2px;top:54px">I-Block(2)=00</div><div class="t" style="left:2px;top:67px">RFU1(1)=0</div><div class="t" style="left:2px;top:80px">Chaining(1)=0</div><div class="t" style="left:2px;top:93px">CIDF(1)=0</div><div class="t" style="left:2px;top:106px">NADF(1)=0</div><div class="t" style="left:2px;top:119px">RFU2(1)=1</div><div class="t" style="left:2px;top:132px">BlockNumber(1)=0</div><div class="t" style="left:2px;top:143px">Unnamed</div>
<div class="a" style="left:237px;top:0;width:18px;height:147px;background:linear-gradient(to right,#e2e2e2 0,#eeeeee 2px,#f0f0f0 60%,#ececec 100%)"></div><svg class="a" style="left:237px;top:0" width="18" height="147" viewBox="0 0 18 147"><path d="M5.8 12.4h7.2l-3.6-4.5z" fill="#222"/><path d="M5.8 136.2h7.2l-3.6 4.3z" fill="#222"/><rect x="2" y="19.5" width="13.5" height="14" rx="2" fill="#f4f4f4" stroke="#9a9a9a"/><rect x="3" y="20.5" width="11.5" height="12" rx="1.5" fill="none" stroke="#fff" stroke-width=".8"/><path d="M5.5 23.5h7M5.5 26.5h7M5.5 29.5h7" stroke="#5a5a5a" stroke-width="1.2"/></svg></div>
<div class="t " style="left:710px;top:268px;">RFID Standard</div>
<div class="spin" style="left:710px;top:283px;height:23px"><i></i></div>
<div class="input" style="left:724px;top:287px;width:149px;height:16px;line-height:17px">ISO 14443 Type A</div>
<div class="t " style="left:889px;top:268px;">Bit Rate (bps)</div>
<div class="spin" style="left:890px;top:283px;height:23px"><i></i></div>
<div class="input" style="left:904px;top:287px;width:64px;height:16px;line-height:17px">106k</div>
<!-- settings tab control -->
<div class="page" style="left:698px;top:367px;width:286px;height:190px"></div>
<div class="tab" style="left:700px;top:346px;width:131px;height:22px;line-height:21px">Hardware Configuration</div>
<div class="tab sel" style="left:831px;top:343px;width:109px;height:27px;line-height:23px">Acquision Settings</div>
<div class="a" style="left:835px;top:367px;width:102px;height:4px;background:#b3b3b3"></div>
<div class="t " style="left:721px;top:378px;">Trigger Settings</div>
<div class="a" style="left:720px;top:394px;width:239px;height:103px;box-shadow:inset 1px 1px 0 #c8c8c8,inset 2px 2px 0 #7a7a7a,inset 3px 3px 0 #8a8a8a,inset 4px 4px 0 #bdbdbd,inset -1px -1px 0 #6e6e6e,inset -2px -2px 0 #d6d6d6,inset -3px -3px 0 #cacaca,inset -4px -4px 0 #a4a4a4"></div>
<div class="t t12" style="left:741px;top:399px;letter-spacing:0">Trigger Mode</div>
<div class="spin" style="left:729px;top:413px;height:24px"><i></i></div>
<div class="input" style="left:743px;top:417px;width:205px;height:17px;line-height:19px;font-size:12px;letter-spacing:-0.2px;padding-left:3px">Analog Rising Edge</div>
<div class="t " style="left:740px;top:448px;">Analog Threshold (dBm)</div>
<div class="spin" style="left:729px;top:461px;height:23px"><i></i></div>
<div class="input" style="left:743px;top:465px;width:77px;height:15px;line-height:16px">7,1</div>
<div class="t " style="left:868px;top:448px;">Pre-trigger (%)</div>
<div class="spin" style="left:857px;top:461px;height:23px"><i></i></div>
<div class="input" style="left:871px;top:465px;width:77px;height:15px;line-height:16px">10</div>
<div class="t " style="left:722px;top:506px;">Acquisition Time (s)</div>
<div class="spin" style="left:722px;top:521px;height:23px"><i></i></div>
<div class="input" style="left:736px;top:525px;width:77px;height:16px;line-height:17px;padding-left:3px">500m</div>
<div class="t " style="left:830px;top:506px;">Acquisition Mode</div>
<div class="spin" style="left:829px;top:522px;height:24px"><i></i></div>
<div class="input" style="left:843px;top:526px;width:114px;height:17px;line-height:18px;font-size:12px;letter-spacing:-0.2px;padding-left:3px">Instant Return</div>
<!-- buttons -->
<div class="btn" style="left:697px;top:569px;width:95px;height:29px;line-height:29px">Analyse</div>
<div class="btn" style="left:804px;top:569px;width:84px;height:29px;line-height:29px">Save IQ</div>
<div class="btn" style="left:900px;top:569px;width:83px;height:29px;line-height:29px">Load IQ</div>
<div class="btn" style="left:697px;top:611px;width:95px;height:29px;line-height:29px;padding-left:14px">Acquire</div>
<div class="btn" style="left:804px;top:611px;width:179px;height:29px;line-height:29px;color:#ff1a1a;padding-left:14px;letter-spacing:-0.9px">STOP</div>
<div class="a" style="left:704px;top:618px;width:16px;height:16px;border-radius:50%;background:radial-gradient(circle at 38% 36%,#3a5a20 0,#203c0c 45%,#142a06 100%);box-shadow:1.5px 1.5px 0 0.5px #dedede,0 0 0 1px #5a6a50"></div>
<div class="a" style="left:816px;top:618px;width:16px;height:16px;border-radius:50%;background:radial-gradient(circle at 38% 36%,#9cff70 0,#50f822 50%,#38d818 100%);box-shadow:1.5px 1.5px 0 0.5px #dedede,0 0 0 1px #6a9a5a"></div>
<!--BODY4-->
</body></html>
